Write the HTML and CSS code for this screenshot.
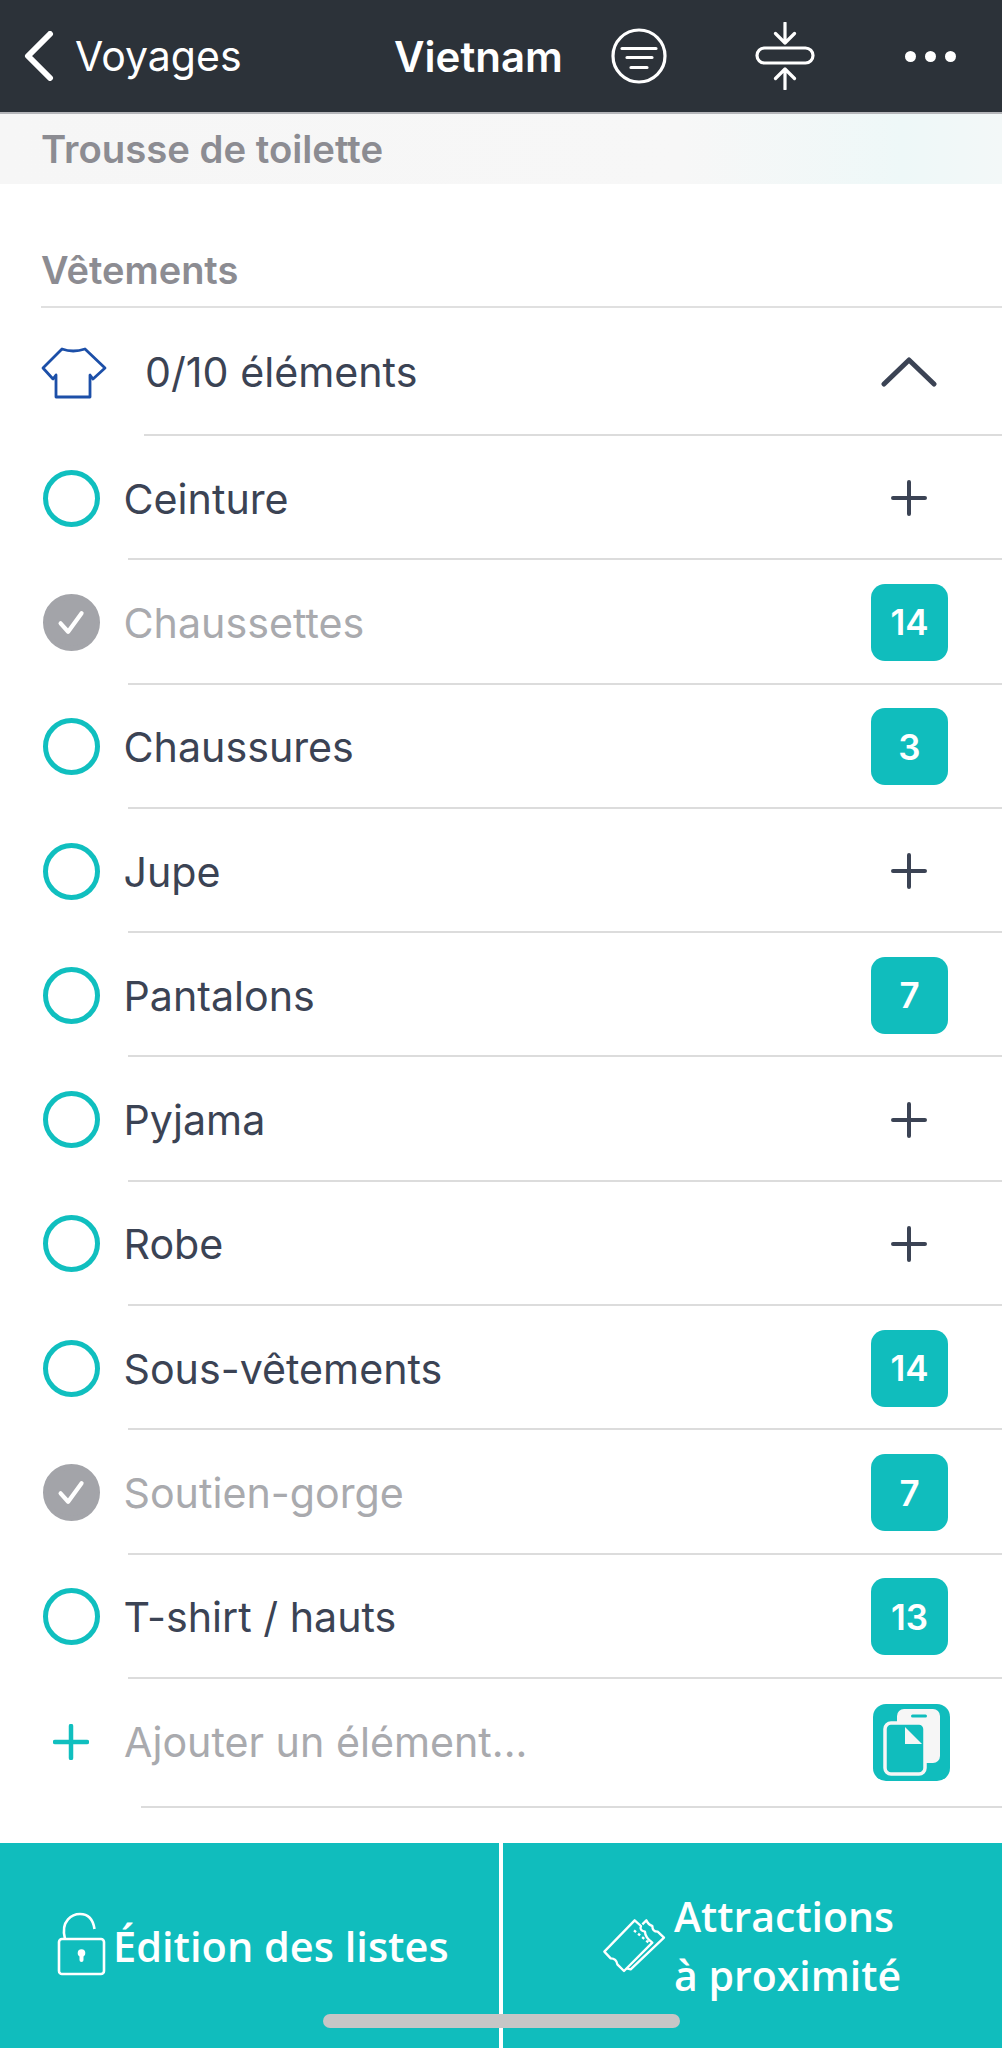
FILE: index.html
```html
<!DOCTYPE html>
<html lang="fr">
<head>
<meta charset="utf-8">
<title>Vietnam</title>
<link rel="stylesheet" href="styles.css">
</head>
<body>
<div class="page">
  <header class="topbar">
    <svg class="back" viewBox="0 0 30 50"><path d="M26 3 L4 25 L26 47"/></svg>
    <span class="back-label">Voyages</span>
    <span class="title">Vietnam</span>
    <svg class="filter" viewBox="0 0 56 56"><circle cx="28" cy="28" r="26"/><path d="M11 20.500H45M16 29.500H41M20 39.500H36"/></svg>
    <svg class="compress" viewBox="0 0 60 68"><rect x="2" y="26" width="56" height="15" rx="7.500"/><path d="M30 1V21M20.500 11.500L30 21L39.500 11.500M30 47V67M20.500 56.500L30 47L39.500 56.500"/></svg>
    <div class="dots"><i></i><i></i><i></i></div>
  </header>
  <div class="band">Trousse de toilette</div>
  <h2 class="section">Vêtements</h2>
  <div class="summary">
    <svg class="shirt" viewBox="0 0 66 52"><path d="M21 2 Q32 6 44 2 L64 21 L52 32 L49 28 L49 50 L15 50 L15 28 L12 32 L2 21 Z"/></svg>
    <span class="summary-text">0/10 éléments</span>
    <svg class="chevron" viewBox="0 0 56 30"><path d="M3 27 L28 3 L53 27"/></svg>
  </div>
  <div class="sep sep-summary"></div>
  <div class="row"><span class="circle"></span><span class="label">Ceinture</span><svg class="plus" viewBox="0 0 36 36"><path d="M18 2V34M2 18H34"/></svg></div>
  <div class="sep"></div>
  <div class="row done"><span class="circle"><svg viewBox="0 0 56 56"><path d="M15 29L24 39L40 17"/></svg></span><span class="label">Chaussettes</span><span class="badge">14</span></div>
  <div class="sep"></div>
  <div class="row"><span class="circle"></span><span class="label">Chaussures</span><span class="badge">3</span></div>
  <div class="sep"></div>
  <div class="row"><span class="circle"></span><span class="label">Jupe</span><svg class="plus" viewBox="0 0 36 36"><path d="M18 2V34M2 18H34"/></svg></div>
  <div class="sep"></div>
  <div class="row"><span class="circle"></span><span class="label">Pantalons</span><span class="badge">7</span></div>
  <div class="sep"></div>
  <div class="row"><span class="circle"></span><span class="label">Pyjama</span><svg class="plus" viewBox="0 0 36 36"><path d="M18 2V34M2 18H34"/></svg></div>
  <div class="sep"></div>
  <div class="row"><span class="circle"></span><span class="label">Robe</span><svg class="plus" viewBox="0 0 36 36"><path d="M18 2V34M2 18H34"/></svg></div>
  <div class="sep"></div>
  <div class="row"><span class="circle"></span><span class="label">Sous-vêtements</span><span class="badge">14</span></div>
  <div class="sep"></div>
  <div class="row done"><span class="circle"><svg viewBox="0 0 56 56"><path d="M15 29L24 39L40 17"/></svg></span><span class="label">Soutien-gorge</span><span class="badge">7</span></div>
  <div class="sep"></div>
  <div class="row"><span class="circle"></span><span class="label">T-shirt / hauts</span><span class="badge">13</span></div>
  <div class="sep"></div>
  <div class="row add">
    <svg class="add-plus" viewBox="0 0 36 36"><path d="M18 2V34M2 18H34"/></svg>
    <span class="label">Ajouter un élément...</span>
    <svg class="copy" viewBox="0 0 77 77">
      <rect class="copy-bg" width="77" height="77" rx="13"/>
      <rect class="copy-light" x="24" y="5" width="43" height="54" rx="7"/>
      <rect class="copy-bg" x="38" y="10.500" width="16" height="3" rx="1.500"/>
      <rect class="copy-front" x="12" y="19" width="40" height="51" rx="6"/>
      <path class="copy-light" d="M32 23L49 40H32Z"/>
    </svg>
  </div>
  <div class="sep sep-add"></div>
  <footer class="bottom">
    <div class="action action-left">
      <svg class="lock" viewBox="0 0 50 64"><path d="M8 27 C3 8 16 2 23 2 C31 2 36 7 37.500 17"/><rect x="2" y="27" width="45" height="35" rx="3"/><circle class="key" cx="24.500" cy="41" r="3.800"/><path class="key-stem" d="M24.500 42V48"/></svg>
      <span>Édition des listes</span>
    </div>
    <div class="action action-right">
      <svg class="ticket" viewBox="0 0 270 270"><path d="M137 58 L156 75 Q150 88 168 92 Q168 108 190 125 L105 210 L85 190 Q82 172 65 172 L46 152 Z"/><path d="M160 70 L172 58 Q178 72 190 75 Q190 92 206 92 L225 110 L125 205 L113 202"/><path class="perf" d="M135 88 L185 130"/></svg>
      <span class="action-text">Attractions<br>à proximité</span>
    </div>
    <div class="home"></div>
  </footer>
</div>
</body>
</html>
```
FILE: styles.css
```css
* { box-sizing: border-box; }
html, body { margin: 0; padding: 0; background: #fff; }
.page {
  width: 1002px;
  height: 2048px;
  display: flex;
  flex-direction: column;
  overflow: hidden;
  font-family: Inter, "Liberation Sans", sans-serif;
  color: #3b4354;
}
svg { display: block; flex: none; fill: none; }

.topbar {
  height: 112px;
  flex: none;
  background: #2c3239;
  color: #fff;
  display: flex;
  align-items: center;
  padding-left: 24px;
}
.topbar svg { stroke: #fff; stroke-linecap: round; stroke-linejoin: round; }
.back { width: 30px; height: 50px; stroke-width: 6; }
.back-label { margin-left: 21px; font-size: 41px; width: 220px; }
.title { margin-left: 99px; font-size: 42px; font-weight: 600; width: 0; white-space: nowrap; }
.filter { margin-left: 217px; width: 56px; height: 56px; stroke-width: 3.200; }
.compress { margin-left: 88px; width: 60px; height: 68px; stroke-width: 3.200; }
.dots { margin-left: 90px; display: flex; gap: 9px; }
.dots i { width: 11px; height: 11px; border-radius: 50%; background: #fff; }

.band {
  height: 72px;
  flex: none;
  border-top: 2px solid #b5b6ba;
  background: linear-gradient(90deg, #f6f6f6 0%, #f7f7f7 68%, #eef8f8 90%, #f3f8f8 100%);
  padding-left: 41px;
  display: flex;
  align-items: center;
  font-size: 38.300px;
  font-weight: 600;
  color: #8c8c92;
}
.section {
  height: 124px;
  flex: none;
  margin: 0 0 0 41px;
  border-bottom: 2px solid #e0e0e0;
  padding-bottom: 13px;
  display: flex;
  align-items: flex-end;
  font-size: 38px;
  line-height: 46px;
  font-weight: 600;
  color: #8c8c92;
}
.summary {
  height: 126px;
  flex: none;
  display: flex;
  align-items: center;
  padding-left: 41px;
  padding-top: 2px;
  font-size: 41.200px;
}
.shirt { width: 66px; height: 52px; margin-top: 2px; stroke: #1c4fa8; stroke-width: 2.800; stroke-linejoin: round; }
.summary-text { margin-left: 38px; flex: 1; }
.chevron { width: 56px; height: 30px; margin-right: 65px; stroke: #3b4354; stroke-width: 5; stroke-linecap: round; stroke-linejoin: round; }

.sep { height: 2px; flex: none; margin-left: 128px; background: #dcdcdc; }
.sep-summary { margin-left: 144px; }
.sep-add { margin-left: 141px; }

.row {
  height: 122.300px;
  flex: none;
  display: flex;
  align-items: center;
  padding-left: 43px;
  padding-top: 2px;
  font-size: 41.200px;
}
.circle {
  width: 57px;
  height: 57px;
  border-radius: 50%;
  border: 5px solid #10bfbf;
  flex: none;
}
.label { margin-left: 23.500px; flex: 1; padding-top: 1px; }
.done .circle { background: #a3a4a9; border-color: #a3a4a9; }
.circle svg { width: 47px; height: 47px; stroke: #fff; stroke-width: 5; stroke-linecap: round; stroke-linejoin: round; }
.done .label { color: #a9aaae; }
.plus { width: 36px; height: 36px; margin-right: 75px; stroke: #3b4354; stroke-width: 4; stroke-linecap: round; }
.badge {
  width: 77px;
  height: 77px;
  margin-right: 54px;
  border-radius: 14px;
  background: #10bdbd;
  color: #fff;
  font-size: 35px;
  font-weight: 600;
  display: flex;
  align-items: center;
  justify-content: center;
}
.add { height: 127px; padding-left: 53px; padding-top: 0; }
.add .label { margin-left: 35px; color: #a9aaae; padding-top: 0; }
.add-plus { width: 36px; height: 36px; stroke: #10bfbf; stroke-width: 4.500; stroke-linecap: round; }
.copy { width: 77px; height: 77px; margin-right: 52px; }
.copy-bg { fill: #10bdbd; }
.copy-light { fill: #f6f6f6; }
.copy-front { fill: #10bdbd; stroke: #f6f6f6; stroke-width: 3.500; }

.bottom {
  margin-top: auto;
  height: 205px;
  flex: none;
  position: relative;
  display: flex;
  justify-content: space-between;
  font-family: "Open Sans", "Noto Sans", sans-serif;
  font-size: 41.500px;
  font-weight: 600;
  color: #fff;
}
.action { width: 499px; background: #10bdbd; display: flex; align-items: center; }
.action-left { padding-left: 57px; gap: 6px; }
.action-right { padding-left: 100px; gap: 9px; line-height: 59px; }
.action-text { font-size: 41px; }
.lock { width: 50px; height: 64px; stroke: #fff; stroke-width: 2.600; margin-top: -3px; }
.key { fill: #fff; stroke: none; }
.key-stem { stroke-width: 4; stroke-linecap: round; }
.ticket { width: 90px; height: 90px; margin-left: -14px; margin-right: -14px; stroke: #fff; stroke-width: 7; stroke-linejoin: round; }
.perf { stroke-dasharray: 8 8; }
.home {
  position: absolute;
  left: 323px;
  top: 171px;
  width: 357px;
  height: 14px;
  border-radius: 7px;
  background: #c6c6c6;
}
```
